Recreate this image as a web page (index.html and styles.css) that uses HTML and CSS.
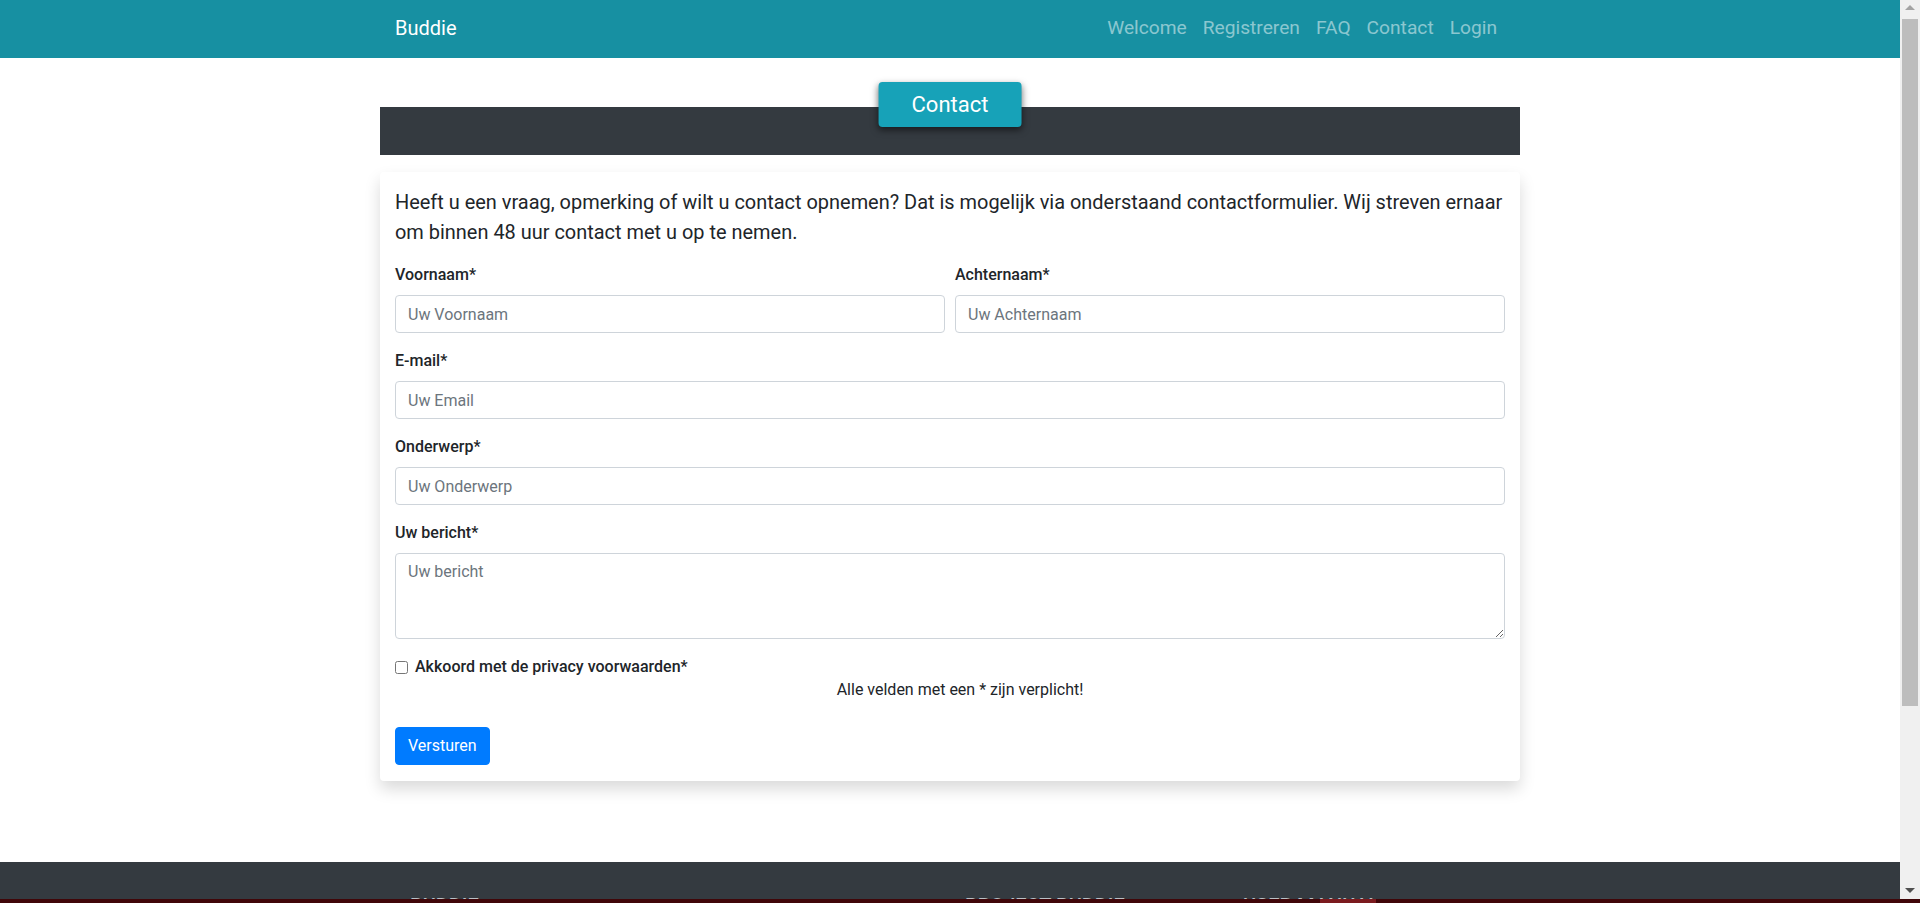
FILE: index.html
```html
<!DOCTYPE html>
<html lang="nl">
<head>
<meta charset="utf-8">
<title>Contact - Buddie</title>
<link rel="stylesheet" href="styles.css">
</head>
<body>
<header class="navbar">
  <div class="container nav-inner">
    <a class="brand" href="#">Buddie</a>
    <ul class="nav-links">
      <li><a href="#">Welcome</a></li>
      <li><a href="#">Registreren</a></li>
      <li><a href="#">FAQ</a></li>
      <li><a href="#">Contact</a></li>
      <li><a href="#">Login</a></li>
    </ul>
  </div>
</header>

<main class="container main">
  <div class="title-band">
    <h1 class="title-badge">Contact</h1>
  </div>
  <section class="card">
    <p class="intro">Heeft u een vraag, opmerking of wilt u contact opnemen? Dat is mogelijk via onderstaand contactformulier. Wij streven ernaar om binnen 48 uur contact met u op te nemen.</p>
    <form class="contact-form">
      <div class="form-row">
        <div class="form-group col">
          <label for="voornaam">Voornaam*</label>
          <input id="voornaam" class="form-control" type="text" placeholder="Uw Voornaam">
        </div>
        <div class="form-group col">
          <label for="achternaam">Achternaam*</label>
          <input id="achternaam" class="form-control" type="text" placeholder="Uw Achternaam">
        </div>
      </div>
      <div class="form-group">
        <label for="email">E-mail*</label>
        <input id="email" class="form-control" type="email" placeholder="Uw Email">
      </div>
      <div class="form-group">
        <label for="onderwerp">Onderwerp*</label>
        <input id="onderwerp" class="form-control" type="text" placeholder="Uw Onderwerp">
      </div>
      <div class="form-group">
        <label for="bericht">Uw bericht*</label>
        <textarea id="bericht" class="form-control textarea" rows="3" placeholder="Uw bericht"></textarea>
      </div>
      <div class="form-check">
        <label class="check-label"><input type="checkbox" class="check-input"> Akkoord met de privacy voorwaarden*</label>
        <p class="required-note">Alle velden met een * zijn verplicht!</p>
      </div>
      <button type="submit" class="btn-primary">Versturen</button>
    </form>
  </section>
</main>

<footer class="footer">
  <div class="footer-grid">
    <div class="footer-col">
      <h5 class="footer-title">Buddie</h5>
      <p class="footer-text">Buddie brengt mensen met elkaar in contact. Samen sporten, samen leren, samen genieten.</p>
    </div>
    <div class="footer-col">
      <h5 class="footer-title">Project Buddie</h5>
      <ul class="footer-list">
        <li><a href="#">Over ons</a></li>
        <li><a href="#">FAQ</a></li>
        <li><a href="#">Contact</a></li>
      </ul>
    </div>
    <div class="footer-col">
      <h5 class="footer-title">User manual</h5>
      <ul class="footer-list">
        <li><a href="#">Handleiding</a></li>
        <li><a href="#">Privacy voorwaarden</a></li>
      </ul>
    </div>
  </div>
  <div class="footer-copy">© 2020 Copyright: Buddie</div>
</footer>

<div class="fake-scrollbar" aria-hidden="true">
  <span class="sb-arrow sb-up"></span>
  <span class="sb-thumb"></span>
  <span class="sb-arrow sb-down"></span>
</div>
<div class="bottom-strip" aria-hidden="true"><span class="strip-seg"></span></div>
</body>
</html>
```

FILE: styles.css
```css
* { box-sizing: border-box; }

html {
  margin: 0;
  padding: 0;
}

body {
  margin: 0 20px 0 0;
  padding: 0;
  font-family: Roboto, "Liberation Sans", Arial, sans-serif;
  font-size: 16px;
  line-height: 1.5;
  color: #212529;
  background: #fff;
}

a { text-decoration: none; }

.container {
  width: 1140px;
  margin: 0 auto;
}

/* Navbar */
.navbar {
  background: #1790a2;
  height: 58px;
}

.nav-inner {
  height: 100%;
  padding: 0 15px;
  display: flex;
  align-items: center;
  justify-content: space-between;
}

.brand {
  color: #fff;
  font-size: 20px;
  line-height: 30px;
  margin-top: -3px;
}

.nav-links {
  list-style: none;
  margin: -3px 0 0;
  padding: 0;
  display: flex;
}

.nav-links a {
  display: block;
  padding: 0 8px;
  font-size: 19.2px;
  line-height: 28px;
  color: rgba(255, 255, 255, 0.5);
}

/* Main */
.main {
  padding-top: 49px;
  margin-bottom: 81px;
}

.title-band {
  position: relative;
  height: 48px;
  background: #343a40;
}

.title-badge {
  position: absolute;
  left: 50%;
  top: -25px;
  transform: translateX(-50%);
  margin: 0;
  padding: 6px 33px;
  font-size: 22px;
  font-weight: 400;
  line-height: 33px;
  color: #fff;
  background: #17a2b8;
  border-radius: 4px;
  box-shadow: 0 3px 7px rgba(0, 0, 0, 0.55);
  white-space: nowrap;
}

.card {
  margin-top: 17px;
  padding: 15px 15px 16px;
  background: #fff;
  border-radius: 4px;
  box-shadow: 0 8px 16px rgba(0, 0, 0, 0.15);
}

.intro {
  margin: 0 0 16px;
  font-size: 19.95px;
  line-height: 30px;
}

.form-row {
  display: flex;
  margin: 0 -5px;
}

.form-row .col {
  flex: 1 1 0;
  padding: 0 5px;
}

.form-group {
  margin-bottom: 16px;
}

.form-group label {
  display: block;
  margin-bottom: 8px;
  font-weight: 500;
  line-height: 24px;
}

.form-control {
  display: block;
  width: 100%;
  height: 38px;
  padding: 6px 12px;
  font-family: inherit;
  font-size: 16px;
  line-height: 24px;
  color: #495057;
  background: #fff;
  border: 1px solid #ced4da;
  border-radius: 4px;
}

.form-control::placeholder {
  color: #6c757d;
  opacity: 1;
}

.textarea {
  height: 86px;
  resize: vertical;
}

.form-check {
  margin: 0;
}

.check-label {
  display: flex;
  align-items: center;
  font-weight: 500;
  line-height: 24px;
}

.check-input {
  width: 13px;
  height: 13px;
  margin: 0 7px 0 0;
}

.required-note {
  margin: -1px 0 25px;
  padding-left: 20px;
  text-align: center;
  line-height: 24px;
}

.btn-primary {
  display: inline-block;
  padding: 6px 12px;
  font-family: inherit;
  font-size: 16px;
  line-height: 24px;
  color: #fff;
  background: #007bff;
  border: 1px solid #007bff;
  border-radius: 4px;
  cursor: pointer;
}

/* Footer */
.footer {
  background: #343a40;
  padding: 32px 0 0;
  color: #adb5bd;
}

.footer-grid {
  width: 1110px;
  margin: 0 auto;
  padding-left: 15px;
  display: grid;
  grid-template-columns: 555px 278px 1fr;
}

.footer-title {
  margin: 0 0 12px;
  font-size: 20px;
  font-weight: 500;
  line-height: 24px;
  text-transform: uppercase;
  color: #b9c0c6;
}

.footer-text {
  margin: 0;
  max-width: 420px;
  font-size: 15px;
}

.footer-list {
  list-style: none;
  margin: 0;
  padding: 0;
  font-size: 15px;
}

.footer-list a {
  color: #adb5bd;
}

.footer-copy {
  margin-top: 40px;
  padding: 16px 0;
  text-align: center;
  font-size: 14px;
  background: #2c3136;
}

/* Browser scrollbar as seen in the screenshot */
.fake-scrollbar {
  position: fixed;
  top: 0;
  right: 0;
  width: 20px;
  height: 100vh;
  background: #f0f0f0;
  z-index: 10;
}

.sb-thumb {
  position: absolute;
  top: 19px;
  left: 2px;
  right: 2px;
  height: 687px;
  background: #bdbdbd;
}

.sb-arrow {
  position: absolute;
  left: 5px;
  width: 0;
  height: 0;
  border-left: 5px solid transparent;
  border-right: 5px solid transparent;
}

.sb-up {
  top: 5px;
  border-bottom: 5px solid #a3a3a3;
}

.sb-down {
  bottom: 10px;
  border-top: 5px solid #505050;
}

.bottom-strip {
  position: fixed;
  left: 0;
  right: 0;
  bottom: 0;
  height: 4px;
  background: #400609;
  z-index: 20;
}

.strip-seg {
  position: absolute;
  left: 1320px;
  top: 0;
  width: 56px;
  height: 4px;
  background: #7b1a1e;
}
```
